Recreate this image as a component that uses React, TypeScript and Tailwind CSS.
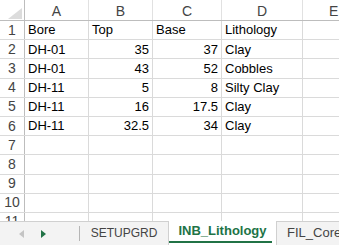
import React from "react";

const cols = [
  { key: "A", width: "w-[64px]" },
  { key: "B", width: "w-[64px]" },
  { key: "C", width: "w-[69px]" },
  { key: "D", width: "w-[81px]" },
];

const rows: (string | number)[][] = [
  ["Bore", "Top", "Base", "Lithology"],
  ["DH-01", 35, 37, "Clay"],
  ["DH-01", 43, 52, "Cobbles"],
  ["DH-11", 5, 8, "Silty Clay"],
  ["DH-11", 16, 17.5, "Clay"],
  ["DH-11", 32.5, 34, "Clay"],
  ["", "", "", ""],
  ["", "", "", ""],
  ["", "", "", ""],
  ["", "", "", ""],
  ["", "", "", ""],
];

const font = { fontFamily: '"Liberation Sans", Arial, sans-serif' };

export default function App() {
  return (
    <div
      className="w-[339px] h-[245px] bg-white flex flex-col overflow-hidden text-[13px] text-black"
      style={font}
    >
      <div className="flex-1 overflow-hidden">
        {/* column headers */}
        <div className="flex h-[21px] border-b border-[#bdbdbd] text-[#444] text-[14px]">
          <div className="w-[25px] shrink-0 border-r border-[#bdbdbd] relative">
            <svg
              width="14"
              height="11"
              viewBox="0 0 14 11"
              className="absolute left-[8px] top-[8px]"
            >
              <polygon points="14,0 14,11 0,11" fill="#dcdcdc" />
            </svg>
          </div>
          {cols.map((c) => (
            <div
              key={c.key}
              className={`${c.width} shrink-0 border-r border-[#e1e1e1] flex items-center justify-center pt-[2px]`}
            >
              {c.key}
            </div>
          ))}
          <div className="flex-1 flex items-center pt-[2px] pl-[26px]">E</div>
        </div>

        {rows.map((r, i) => (
          <div key={i} className="flex h-[19.2px] border-b border-[#dadada]">
            <div className="w-[25px] shrink-0 border-r border-[#bdbdbd] flex items-center justify-center text-[#444] text-[14px]">
              {i + 1}
            </div>
            {r.map((v, j) => (
              <div
                key={j}
                className={`${cols[j].width} shrink-0 border-r border-[#dadada] flex items-center whitespace-nowrap ${
                  typeof v === "number" ? "justify-end pr-[3px]" : "pl-[3px]"
                }`}
              >
                {v}
              </div>
            ))}
            <div className="flex-1" />
          </div>
        ))}
      </div>

      {/* sheet tabs */}
      <div className="h-[24px] shrink-0 bg-[#f3f3f3] border-t border-[#d0d0d0] flex items-stretch text-[12px] text-[#444]">
        <div className="w-[80px] shrink-0 flex items-center">
          <svg width="6" height="8" viewBox="0 0 6 8" className="ml-[19px]">
            <polygon points="5,0 5,8 0,4" fill="#c4c4c4" />
          </svg>
          <svg width="6" height="8" viewBox="0 0 6 8" className="ml-[16px]">
            <polygon points="0,0 0,8 5,4" fill="#217346" />
          </svg>
          <div className="ml-auto h-[15px] w-px bg-[#b5b5b5]" />
        </div>
        <div className="w-[88px] shrink-0 flex items-center justify-center pb-[2px]">
          SETUPGRD
        </div>
        <div className="w-[109px] shrink-0 bg-white border-x border-[#d0d0d0] -mt-px flex flex-col">
          <div className="flex-1 flex items-center justify-center font-bold text-[#217346] text-[13px]">
            INB_Lithology
          </div>
          <div className="h-[2px] bg-[#217346] mb-[2px] mr-[4px]" />
        </div>
        <div className="flex-1 flex items-center pl-[10px] pb-[2px] whitespace-nowrap text-[13px]">
          FIL_Core
        </div>
      </div>
    </div>
  );
}
